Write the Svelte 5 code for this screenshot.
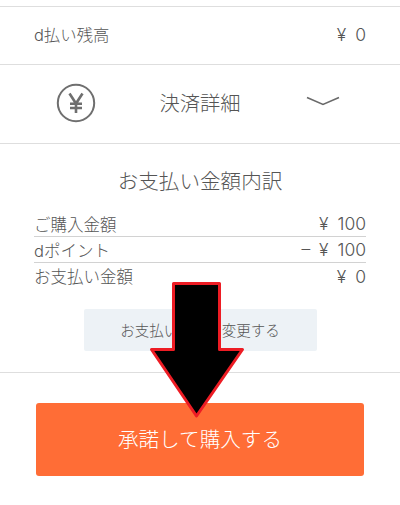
<script>
    const breakdown = [
        { label: 'ご購入金額', value: '¥ 100' },
        { label: 'dポイント', value: '– ¥ 100' },
        { label: 'お支払い金額', value: '¥ 0' }
    ];
</script>

<div class="page">
    <section class="balance">
        <span>d払い残高</span>
        <span class="amount">¥ 0</span>
    </section>

    <section class="details-toggle">
        <svg class="yen-icon" viewBox="0 0 40 40" width="40" height="40" aria-hidden="true">
            <circle cx="20" cy="20" r="18.2" fill="none" stroke="#6f6f6f" stroke-width="2" />
            <path d="M13.5 10.5 20 20.5 26.5 10.5M20 20.5V30M14 20.8H26M14 25H26" fill="none" stroke="#6f6f6f" stroke-width="2.6" />
        </svg>
        <span class="details-label">決済詳細</span>
        <svg class="chevron" viewBox="0 0 34 12" width="34" height="12" aria-hidden="true">
            <path d="M1 1.5 17 8.5 33 1.5" fill="none" stroke="#6a6a6a" stroke-width="1.6" />
        </svg>
    </section>

    <section class="summary">
        <h2>お支払い金額内訳</h2>
        <div class="rows">
            {#each breakdown as row}
                <div class="row">
                    <span>{row.label}</span>
                    <span class="amount">{row.value}</span>
                </div>
            {/each}
        </div>
        <button class="change">お支払い方法を変更する</button>
    </section>

    <section class="actions">
        <button class="confirm">承諾して購入する</button>
    </section>

    <svg class="arrow" viewBox="0 0 100 140" width="100" height="140" aria-hidden="true">
        <path d="M25.5 2.5H71.5V68.5H94.5L48.5 135 3.5 68.5H25.5Z" fill="#000" stroke="#ed1c24" stroke-width="3" stroke-linejoin="round" />
    </svg>
</div>

<style>
    :global(body) {
        margin: 0;
        background: #fff;
    }

    .page {
        position: relative;
        height: 505px;
        overflow: hidden;
        padding-top: 6px;
        box-sizing: border-box;
        font-family: Inter, "Noto Sans CJK JP", sans-serif;
        font-weight: 300;
        color: #555;
    }

    .amount {
        font-size: 17.5px;
        word-spacing: 4px;
    }

    .balance {
        display: flex;
        justify-content: space-between;
        align-items: center;
        height: 54px;
        padding: 0 34px 3px;
        border-top: 1.5px solid #dedede;
        font-size: 16.4px;
    }

    .details-toggle {
        display: grid;
        grid-template-columns: 40px 1fr 34px;
        align-items: center;
        height: 78px;
        padding: 0 60px 0 56px;
        border-top: 1.5px solid #dedede;
        border-bottom: 1.5px solid #dedede;
    }

    .yen-icon {
        margin-top: -3px;
    }

    .details-label {
        text-align: center;
        font-size: 20.3px;
        margin: -4px 2px 0 0;
    }

    .chevron {
        margin-top: -5px;
    }

    .summary {
        height: 229px;
        padding: 25px 34px 0;
        box-sizing: border-box;
        border-bottom: 1.5px solid #dedede;
        text-align: center;
    }

    h2 {
        margin: 0 0 16px;
        font-size: 20.6px;
        font-weight: 300;
        line-height: 26px;
    }

    .rows {
        text-align: left;
    }

    .row {
        display: flex;
        justify-content: space-between;
        align-items: center;
        height: 26px;
        box-sizing: border-box;
        border-bottom: 1px solid #d2d2d2;
        font-size: 16.5px;
    }

    .row:last-child {
        border-bottom: none;
    }

    .change {
        display: block;
        width: 233px;
        height: 42px;
        margin: 20px auto 0;
        padding: 0 0 2px;
        border: none;
        border-radius: 2px;
        background: #edf2f6;
        color: #555;
        font: inherit;
        font-size: 14.5px;
    }

    .actions {
        padding: 30px 36px 0;
    }

    .confirm {
        display: block;
        width: 100%;
        height: 73px;
        padding: 0 0 3px;
        border: none;
        border-radius: 3px;
        background: #ff6d36;
        color: #fff;
        font: inherit;
        font-size: 20.6px;
    }

    /* annotation laid over the screenshot */
    .arrow {
        position: absolute;
        left: 148px;
        top: 281px;
    }
</style>
